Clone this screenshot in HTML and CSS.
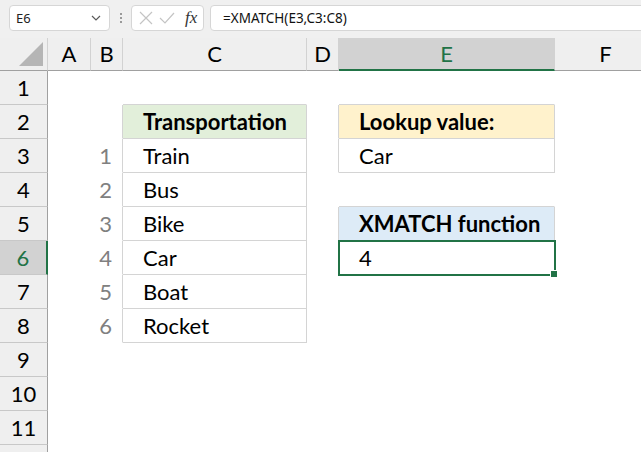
FILE: index.html
```html
<!DOCTYPE html>
<html>
<head>
<meta charset="utf-8">
<link rel="stylesheet" href="styles.css">
</head>
<body>
<div class="app">
  <div class="fbar">
    <div class="namebox">
      <span class="nb-text">E6</span>
      <svg class="chev" width="10" height="6" viewBox="0 0 10 6"><path d="M1 1 L5 5 L9 1" fill="none" stroke="#5a5a5a" stroke-width="1.2"/></svg>
    </div>
    <div class="dots"><i></i><i></i><i></i></div>
    <div class="fxbox">
      <svg class="ic" width="14" height="14" viewBox="0 0 14 14"><path d="M1 1 L13 13 M13 1 L1 13" stroke="#c4c4c4" stroke-width="1.2" fill="none"/></svg>
      <svg class="ic" width="16" height="14" viewBox="0 0 16 14"><path d="M1 7 L6 12 L15 2" stroke="#c4c4c4" stroke-width="1.2" fill="none"/></svg>
      <span class="fx">fx</span>
    </div>
    <div class="formula">=XMATCH(E3,C3:C8)</div>
  </div>

  <div class="sheet">
    <div class="corner"><svg width="26" height="26" viewBox="0 0 26 26"><path d="M25 1 L25 25 L1 25 Z" fill="#b5b5b5"/></svg></div>
    <div class="ch">A</div>
    <div class="ch">B</div>
    <div class="ch">C</div>
    <div class="ch">D</div>
    <div class="ch ch-sel">E</div>
    <div class="ch">F</div>

    <!-- row 1 -->
    <div class="rh">1</div>
    <div class="c"></div><div class="c"></div><div class="c bb"></div><div class="c"></div><div class="c bb"></div><div class="c"></div>

    <!-- row 2 -->
    <div class="rh">2</div>
    <div class="c"></div><div class="c br"></div><div class="c bb br hdr-green b">Transportation</div><div class="c br"></div><div class="c bb br hdr-yellow b">Lookup value:</div><div class="c"></div>

    <!-- row 3 -->
    <div class="rh">3</div>
    <div class="c"></div><div class="c br num">1</div><div class="c bb br t">Train</div><div class="c br"></div><div class="c bb br t">Car</div><div class="c"></div>

    <!-- row 4 -->
    <div class="rh">4</div>
    <div class="c"></div><div class="c br num">2</div><div class="c bb br t">Bus</div><div class="c"></div><div class="c bb"></div><div class="c"></div>

    <!-- row 5 -->
    <div class="rh">5</div>
    <div class="c"></div><div class="c br num">3</div><div class="c bb br t">Bike</div><div class="c br"></div><div class="c bb br hdr-blue b">XMATCH function</div><div class="c"></div>

    <!-- row 6 -->
    <div class="rh rh-sel">6</div>
    <div class="c"></div><div class="c br num">4</div><div class="c bb br t">Car</div><div class="c"></div><div class="c t selected">4</div><div class="c"></div>

    <!-- row 7 -->
    <div class="rh">7</div>
    <div class="c"></div><div class="c br num">5</div><div class="c bb br t">Boat</div><div class="c"></div><div class="c"></div><div class="c"></div>

    <!-- row 8 -->
    <div class="rh">8</div>
    <div class="c"></div><div class="c br num">6</div><div class="c bb br t">Rocket</div><div class="c"></div><div class="c"></div><div class="c"></div>

    <div class="rh">9</div>
    <div class="c"></div><div class="c"></div><div class="c"></div><div class="c"></div><div class="c"></div><div class="c"></div>
    <div class="rh">10</div>
    <div class="c"></div><div class="c"></div><div class="c"></div><div class="c"></div><div class="c"></div><div class="c"></div>
    <div class="rh">11</div>
    <div class="c"></div><div class="c"></div><div class="c"></div><div class="c"></div><div class="c"></div><div class="c"></div>
    <div class="rh"></div>
    <div class="c"></div><div class="c"></div><div class="c"></div><div class="c"></div><div class="c"></div><div class="c"></div>
  </div>
</div>
</body>
</html>
```

FILE: styles.css
```css
* { box-sizing: border-box; }
html, body { margin: 0; padding: 0; background: #ffffff; }
body { width: 641px; height: 452px; overflow: hidden; font-family: "Lato", "Noto Sans", sans-serif; }

.app { width: 641px; overflow: hidden; }

.fbar {
  height: 38px;
  background: #f0f0f0;
  display: flex;
  align-items: flex-start;
  padding: 5px 0 0 9px;
}
.namebox {
  width: 101px;
  height: 26px;
  background: #fff;
  border: 1px solid #d6d6d6;
  border-radius: 4px;
  display: flex;
  align-items: center;
  justify-content: space-between;
  padding: 0 8px 0 6px;
  font-family: "Noto Sans", "Open Sans", sans-serif;
  font-size: 13px;
  color: #222;
}
.dots {
  width: 21px;
  height: 26px;
  display: flex;
  flex-direction: column;
  align-items: center;
  justify-content: center;
  gap: 2px;
}
.dots i { display: block; width: 2px; height: 2px; background: #9a9a9a; }
.fxbox {
  width: 73px;
  height: 26px;
  background: #fff;
  border: 1px solid #d6d6d6;
  border-radius: 4px;
  display: flex;
  align-items: center;
  padding: 0 0 0 7px;
  gap: 6px;
}
.fx {
  font-family: "Liberation Serif", serif;
  font-style: italic;
  font-size: 17px;
  color: #333;
  margin-left: 4px;
}
.formula {
  flex: 1;
  margin-left: 6px;
  margin-right: -4px;
  height: 26px;
  background: #fff;
  border: 1px solid #d6d6d6;
  border-radius: 4px;
  padding-left: 12px;
  display: flex;
  align-items: center;
  font-family: "Noto Sans", "Open Sans", sans-serif;
  font-size: 13.5px;
  color: #111;
}

.sheet {
  display: grid;
  grid-template-columns: 48px 43px 32px 184px 32px 216px 102px;
  grid-template-rows: 33px repeat(11, 34px) 8px;
  font-size: 22px;
  color: #000;
}
.corner {
  background: #efefef;
  border-right: 1px solid #d2d2d2;
  border-bottom: 1px solid #a0a0a0;
  display: flex;
  align-items: flex-end;
  justify-content: flex-end;
  padding: 0 3px 3px 0;
}
.ch {
  background: #efefef;
  border-right: 1px solid #d2d2d2;
  border-bottom: 1px solid #a0a0a0;
  display: flex;
  align-items: flex-end;
  justify-content: center;
  line-height: 26px;
  padding-bottom: 3px;
}
.ch-sel {
  background: #d2d2d2;
  color: #217346;
  border-bottom: 2px solid #217346;
  padding-bottom: 2px;
}
.rh {
  background: #efefef;
  border-right: 1px solid #a0a0a0;
  border-bottom: 1px solid #c8c8c8;
  display: flex;
  align-items: flex-end;
  justify-content: center;
  line-height: 26px;
  padding-bottom: 3px;
}
.rh-sel {
  background: #d2d2d2;
  color: #217346;
  border-right: 2px solid #217346;
}
.c {
  border-right: 1px solid transparent;
  border-bottom: 1px solid transparent;
  display: flex;
  align-items: flex-end;
  line-height: 26px;
  padding-bottom: 3px;
  white-space: nowrap;
}
.c.bb { border-bottom-color: #d4d4d4; }
.c.br { border-right-color: #d4d4d4; }
.t, .b { padding-left: 20px; }
.b { font-weight: 700; }
.hdr-green { background: #e2efda; }
.hdr-yellow { background: #fff2cc; }
.hdr-blue { background: #ddebf7; }
.num { justify-content: flex-end; padding-right: 10px; color: #808080; }
.selected {
  position: relative;
  outline: 2px solid #217346;
  outline-offset: -1px;
}
.selected::after {
  content: "";
  position: absolute;
  right: -4px;
  bottom: -4px;
  width: 6px;
  height: 6px;
  background: #217346;
  border: 1px solid #fff;
}
```
